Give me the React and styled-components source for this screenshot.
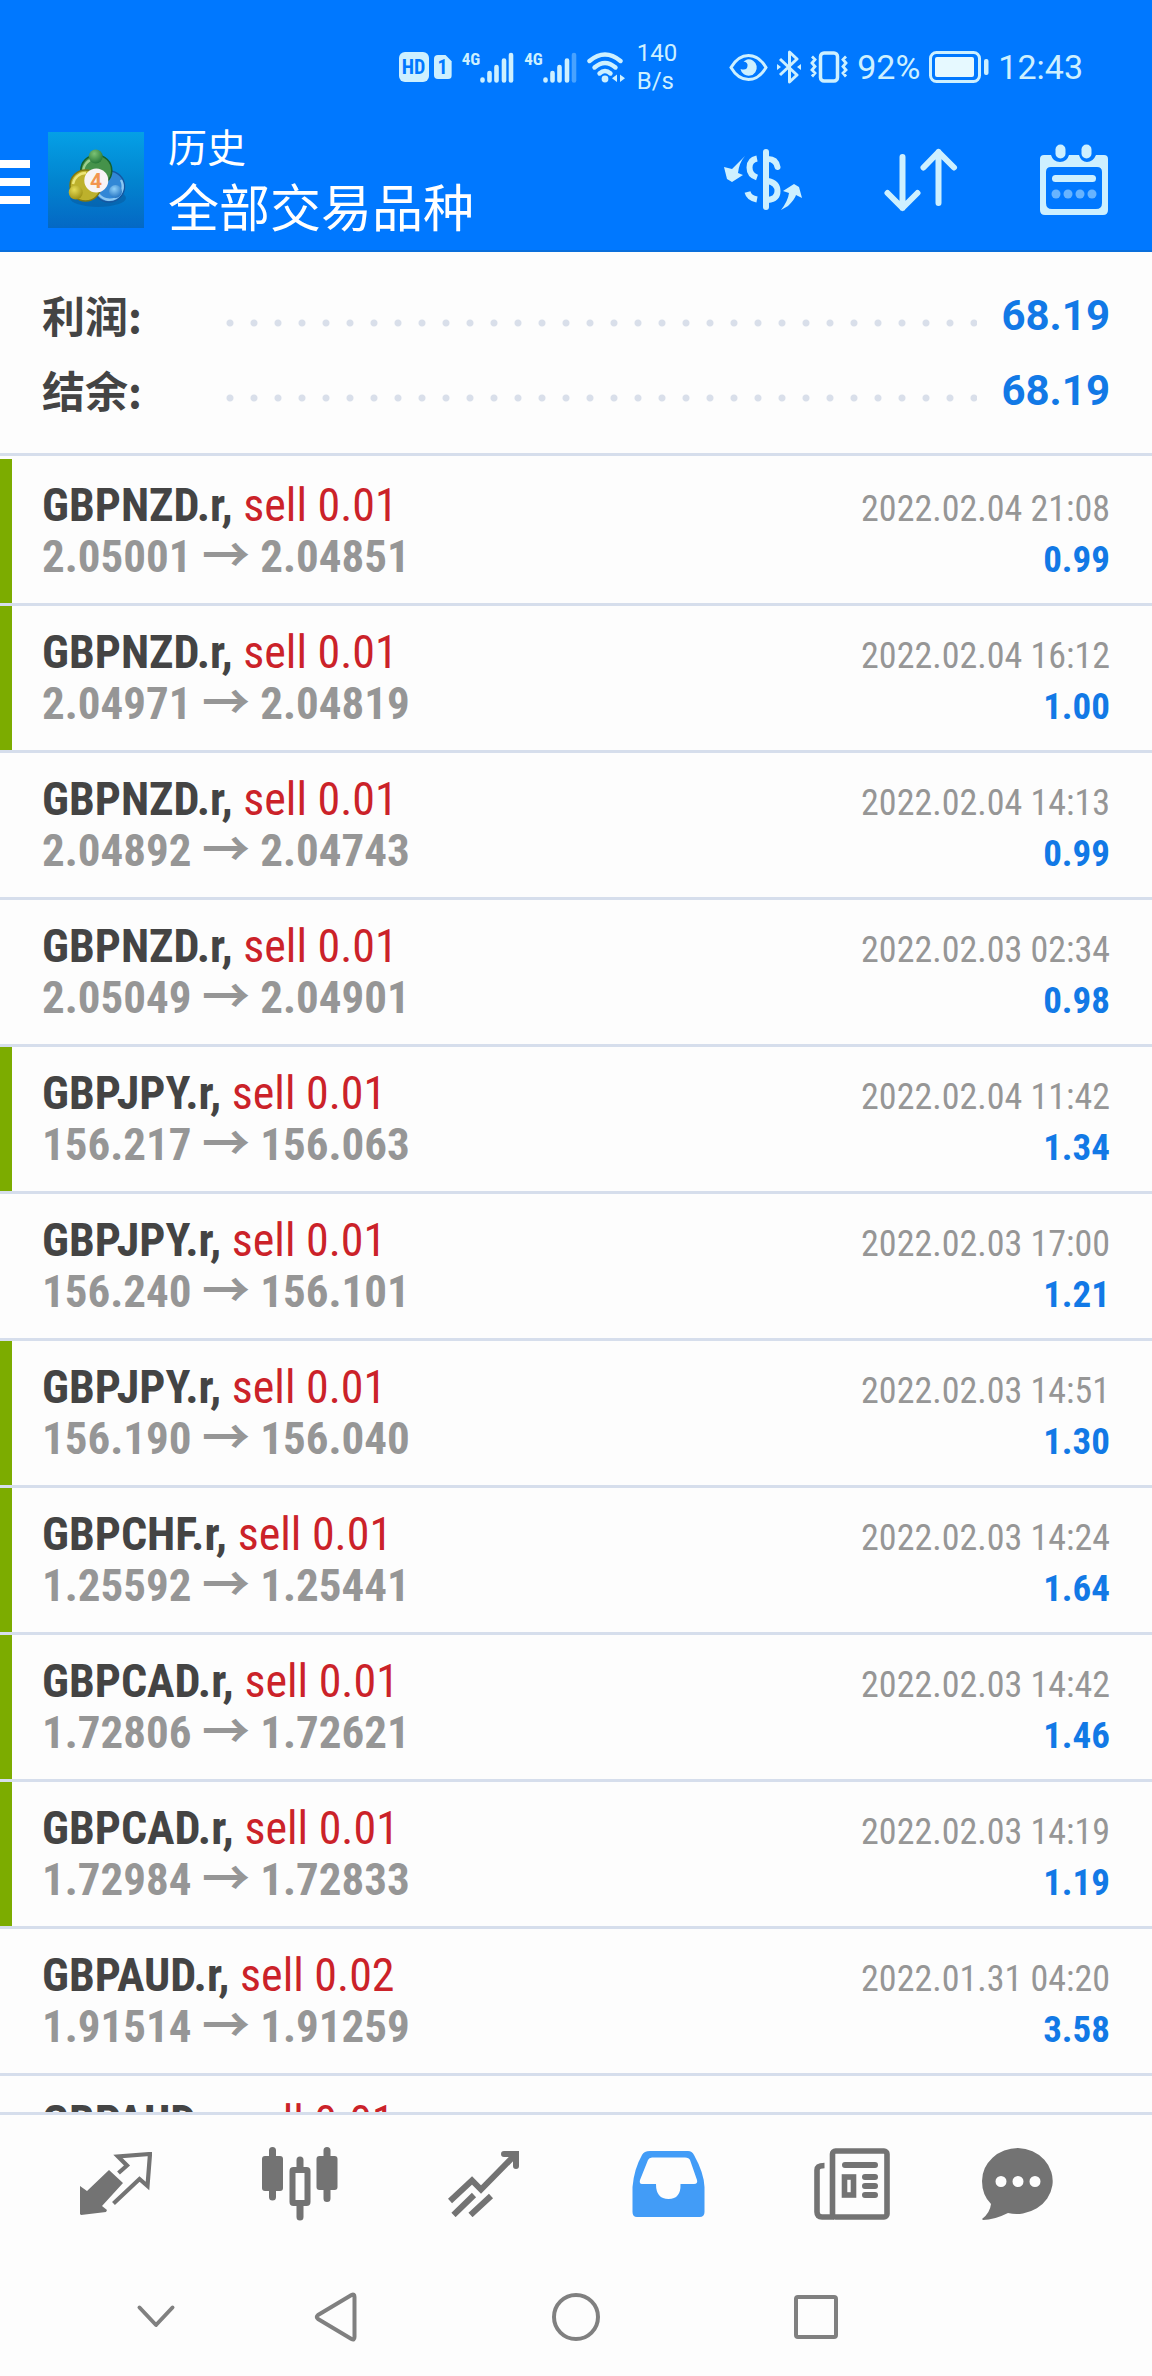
import React from 'react';
import styled, { createGlobalStyle } from 'styled-components';

const condensed = `'Roboto Condensed', 'Roboto', 'Noto Sans CJK SC', sans-serif`;
const regular = `'Roboto', 'Noto Sans CJK SC', sans-serif`;
const ice = '#cdf0ff';
const line = '#d6deec';

const GlobalStyle = createGlobalStyle`
  * { box-sizing: border-box; }
  body { margin: 0; background: #fdfdfd; font-family: ${regular}; }
  button { border: 0; padding: 0; background: none; color: inherit; font: inherit; display: flex; align-items: center; justify-content: center; }
  svg { display: block; flex: none; }
`;

const Screen = styled.div`
  display: flex;
  flex-direction: column;
  height: 100vh;
  background: #fdfdfd;
`;

const Top = styled.header`
  flex: none;
  background: #0078ff;
  border-bottom: 2px solid #0a6fdc;
`;

const StatusBar = styled.div`
  display: flex;
  align-items: center;
  justify-content: flex-end;
  gap: 52px;
  height: 112px;
  padding: 22px 69px 0 0;
  color: ${ice};
`;

const StatusGroup = styled.div`
  display: flex;
  align-items: center;
  gap: ${(p) => p.$gap}px;
`;

const Badge = styled.span`
  display: flex;
  align-items: center;
  justify-content: center;
  width: ${(p) => (p.$sim ? 18 : 30)}px;
  height: ${(p) => (p.$sim ? 24 : 30)}px;
  border-radius: ${(p) => (p.$sim ? 4 : 6)}px;
  clip-path: ${(p) => (p.$sim ? 'polygon(0 0, 66% 0, 100% 26%, 100% 100%, 0 100%)' : 'none')};
  background: ${ice};
  color: #0078ff;
  font: 700 20px/24px ${condensed};
`;

const Signal = styled.div`
  display: flex;
  height: 31px;
  span { font: 700 17px/14px ${condensed}; }
  svg { align-self: flex-end; }
`;

const Speed = styled.div`
  margin-left: 2px;
  font-size: 24px;
  line-height: 28px;
  white-space: pre-line;
`;

const StatusText = styled.span`
  font-size: 34px;
  line-height: 40px;
`;

const AppBar = styled.div`
  display: flex;
  align-items: flex-start;
  height: 138px;
`;

const MenuButton = styled.button`
  width: 30px;
  height: 140px;
`;

const Logo = styled.svg`
  margin: 20px 24px 0 18px;
`;

const Titles = styled.div`
  flex: 1;
  padding-top: 9px;
  color: #fff;
  font-family: 'Noto Sans CJK SC', sans-serif;
`;

const Subtitle = styled.div`
  font-size: 39px;
  line-height: 48px;
`;

const Title = styled.h1`
  margin: 0;
  font-size: 51px;
  font-weight: 400;
  line-height: 72px;
`;

const Actions = styled.div`
  display: flex;
  gap: 81px;
  height: 136px;
  padding-right: 43px;
`;

const Summary = styled.dl`
  flex: none;
  margin: 0;
  padding: 26px 42px 25px;
  border-bottom: 3px solid ${line};
`;

const SummaryRow = styled.div`
  display: flex;
  align-items: center;
  height: 75px;
  font-size: 42px;
  font-weight: 700;
  &::before {
    content: '';
    order: 1;
    flex: 1;
    height: 8px;
    margin: 14px 24px 0 0;
    background: radial-gradient(circle at center, #d9dfea 3px, transparent 4px) 0 0 / 24px 8px;
  }
`;

const SummaryLabel = styled.dt`
  width: 176px;
  padding-bottom: 4px;
  color: #444;
  font-family: 'Noto Sans CJK SC', sans-serif;
  font-size: 43px;
  line-height: 60px;
`;

const SummaryValue = styled.dd`
  order: 2;
  margin: 0;
  color: #1279e6;
`;

const Deals = styled.ul`
  flex: 1;
  min-height: 0;
  margin: 0;
  padding: 3px 0 0;
  overflow: hidden;
  list-style: none;
`;

const Deal = styled.li`
  display: grid;
  grid-template-columns: 1fr auto;
  grid-auto-rows: 51px;
  align-items: baseline;
  height: 147px;
  padding: 21px 42px 0;
  border-bottom: 3px solid ${line};
  background: ${(p) => (p.$marked ? 'linear-gradient(to right, #7cac00 12px, transparent 12px) padding-box' : 'none')};
  font-family: ${condensed};
  font-size: 45px;
  line-height: 51px;
  color: #969696;
`;

const Position = styled.span`
  font-size: 46px;
`;

const Symbol = styled.strong`
  color: #444;
  font-weight: 700;
`;

const Side = styled.span`
  color: #cb2229;
`;

const Prices = styled.span`
  font-weight: 700;
`;

const Arrow = styled.span`
  font-family: 'Noto Sans CJK SC', sans-serif;
  font-size: 48px;
  line-height: 0;
`;

const Time = styled.time`
  font-size: 36px;
  text-align: right;
`;

const Profit = styled.span`
  color: #1279e6;
  font-size: 37px;
  font-weight: 700;
  text-align: right;
`;

const Tabs = styled.nav`
  flex: none;
  display: grid;
  grid-template-columns: repeat(5, 184fr) 148fr;
  height: 141px;
  padding: 0 60px 0 24px;
  border-top: 3px solid ${line};
`;

const Tab = styled.button`
  && { color: ${(p) => (p.$active ? '#429cf7' : '#737373')}; }
`;

const SystemNav = styled.nav`
  flex: none;
  display: grid;
  grid-template-columns: 120fr 240fr 240fr 240fr;
  height: 123px;
  padding: 5px 216px 0 96px;
  color: #808080;
`;

const deals = [
  ['GBPNZD.r', '0.01', '2.05001', '2.04851', '2022.02.04 21:08', '0.99', true],
  ['GBPNZD.r', '0.01', '2.04971', '2.04819', '2022.02.04 16:12', '1.00', true],
  ['GBPNZD.r', '0.01', '2.04892', '2.04743', '2022.02.04 14:13', '0.99', false],
  ['GBPNZD.r', '0.01', '2.05049', '2.04901', '2022.02.03 02:34', '0.98', false],
  ['GBPJPY.r', '0.01', '156.217', '156.063', '2022.02.04 11:42', '1.34', true],
  ['GBPJPY.r', '0.01', '156.240', '156.101', '2022.02.03 17:00', '1.21', false],
  ['GBPJPY.r', '0.01', '156.190', '156.040', '2022.02.03 14:51', '1.30', true],
  ['GBPCHF.r', '0.01', '1.25592', '1.25441', '2022.02.03 14:24', '1.64', true],
  ['GBPCAD.r', '0.01', '1.72806', '1.72621', '2022.02.03 14:42', '1.46', true],
  ['GBPCAD.r', '0.01', '1.72984', '1.72833', '2022.02.03 14:19', '1.19', true],
  ['GBPAUD.r', '0.02', '1.91514', '1.91259', '2022.01.31 04:20', '3.58', false],
  ['GBPAUD.r', '0.01', '1.91514', '1.91259', '2022.02.01 16:27', '1.20', false],
];

const SignalBars = ({ weak }) => (
  <svg width="34" height="31" viewBox="0 0 34 31" stroke="currentColor" strokeWidth="4.6" strokeLinecap="round">
    <path d="M2.5 27.5V28.5M9.5 21V28.5M16.5 15V28.5M24 8.5V28.5" />
    <path d="M31 3V28.5" opacity={weak ? 0.35 : 1} />
  </svg>
);

const WifiIcon = () => (
  <svg width="38" height="31" viewBox="0 0 38 31" fill="none" stroke="currentColor" strokeWidth="4.4" strokeLinecap="round">
    <path d="M2.5 9Q18 -4 33.5 9" />
    <path d="M7.5 15.5Q18 6.5 28.5 15.5" />
    <path d="M12.5 21.5Q18 16.5 23.5 21.5" />
    <circle cx="18" cy="27" r="3.4" fill="currentColor" stroke="none" />
    <path d="M30 22.5V30L25 26.3ZM33 22.5V30L38 26.3Z" fill="currentColor" stroke="none" />
  </svg>
);

const EyeIcon = () => (
  <svg width="39" height="27" viewBox="0 0 39 27">
    <path d="M2 13.5Q9 1.5 19.5 1.5T37 13.5Q30 25.5 19.5 25.5T2 13.5Z" fill="none" stroke="currentColor" strokeWidth="3" />
    <path d="M18 5.5A8.2 8.2 0 1 1 11.5 15Q18 17 18.5 12Q19 8 14.5 7.5Z" fill="currentColor" />
  </svg>
);

const BluetoothIcon = () => (
  <svg width="24" height="34" viewBox="0 0 24 34" fill="none" stroke="currentColor" strokeWidth="3" strokeLinejoin="round">
    <path d="M3 9L20 25L12.5 32V2L20 9L3 25" />
    <path d="M0 14L4 17L0 20ZM24 14L20 17L24 20Z" fill="currentColor" stroke="none" />
  </svg>
);

const VibrateIcon = () => (
  <svg width="38" height="32" viewBox="0 0 38 32" fill="none" stroke="currentColor">
    <rect x="10.5" y="2" width="17" height="28" rx="3.5" strokeWidth="3.5" />
    <path d="M2 5.5L5 8.5L2 12L5 15.5L2 19L5 22L2 25.5M36 5.5L33 8.5L36 12L33 15.5L36 19L33 22L36 25.5" strokeWidth="2.8" />
  </svg>
);

const BatteryIcon = () => (
  <svg width="60" height="32" viewBox="0 0 60 32">
    <rect x="1.5" y="1.5" width="49" height="29" rx="6" fill="none" stroke="currentColor" strokeWidth="3" />
    <rect x="6" y="6" width="39" height="20" rx="2" fill="#e6f9ff" />
    <rect x="55" y="8" width="4.5" height="16" rx="2" fill="currentColor" />
  </svg>
);

const MetaLogo = () => (
  <Logo width="96" height="96" viewBox="0 0 96 96" role="img" aria-label="MetaTrader 4">
    <defs>
      <linearGradient id="sky" x1="0" y1="0" x2="0" y2="1">
        <stop offset="0" stopColor="#05a0e6" />
        <stop offset="0.5" stopColor="#0285d0" />
        <stop offset="1" stopColor="#0468c4" />
      </linearGradient>
      <radialGradient id="green" cx="0.4" cy="0.3" r="0.8">
        <stop offset="0" stopColor="#7cc274" />
        <stop offset="1" stopColor="#1b6e30" />
      </radialGradient>
      <radialGradient id="gold" cx="0.4" cy="0.3" r="0.8">
        <stop offset="0" stopColor="#e6dc55" />
        <stop offset="1" stopColor="#94870c" />
      </radialGradient>
      <radialGradient id="azure" cx="0.4" cy="0.3" r="0.8">
        <stop offset="0" stopColor="#8fd0fa" />
        <stop offset="1" stopColor="#1668bb" />
      </radialGradient>
    </defs>
    <rect width="96" height="96" fill="url(#sky)" />
    <ellipse cx="50" cy="66" rx="28" ry="9" fill="#0a4f8f" opacity="0.4" />
    <circle cx="61" cy="54.5" r="15.5" fill="#3187d6" stroke="#1557a0" strokeWidth="1.5" />
    <path d="M73 48A13 13 0 0 1 50 61" fill="none" stroke="#8cc8f2" strokeWidth="2.4" />
    <circle cx="48.3" cy="38.5" r="15.5" fill="#45924a" stroke="#14602c" strokeWidth="1.5" />
    <path d="M36 44A13 13 0 0 1 45 27" fill="none" stroke="#9ccf8e" strokeWidth="2.4" />
    <circle cx="37.5" cy="53.5" r="15.5" fill="#bdb12c" stroke="#81780f" strokeWidth="1.5" />
    <path d="M25 52A13 13 0 0 1 38 41" fill="none" stroke="#ece578" strokeWidth="2.4" />
    <circle cx="47.7" cy="24.5" r="7" fill="url(#green)" />
    <circle cx="27.7" cy="60.5" r="7" fill="url(#gold)" />
    <circle cx="67.5" cy="59.5" r="6.5" fill="url(#azure)" />
    <circle cx="48.3" cy="48.5" r="12" fill="#f7f3f5" />
    <text x="48" y="56" textAnchor="middle" fontFamily="Roboto, sans-serif" fontWeight="700" fontSize="21" fill="#f2954e">4</text>
  </Logo>
);

const CurrencyIcon = () => (
  <svg width="79" height="62" viewBox="0 0 79 62" fill="none" stroke={ice}>
    <path d="M42 3V58" strokeWidth="6" strokeLinecap="round" />
    <path d="M33 9.5Q25.5 11 25.5 18.5T33 28.5M23.5 43Q25 49 33 50.5" strokeWidth="6" />
    <path d="M44 10Q52 10 53.5 18M44 32Q53.5 34 53.5 42T44 51" strokeWidth="6" strokeLinecap="round" />
    <path d="M21 7L8 20L0 18L3 30L8 33L19 26L14 24Q15 14 21 7ZM57 61L64 57Q71 50 72 46L78 49L75 38L70 35L59 42L65 44Q64 52 57 61Z" fill={ice} stroke="none" />
  </svg>
);

const SortIcon = () => (
  <svg width="74" height="64" viewBox="0 0 74 64" fill="none" stroke={ice} strokeWidth="6" strokeLinecap="round" strokeLinejoin="round">
    <path d="M18.5 9V60M3.5 45L18.5 60L33.5 45M54.5 55V4M39.5 19.5L54.5 4L70 19.5" />
  </svg>
);

const CalendarIcon = () => (
  <svg width="70" height="72" viewBox="0 0 70 72" fill={ice}>
    <path fillRule="evenodd" d="M5 11H12Q14 18 21 18T30 11H40Q42 18 48 18T57 11H65Q69 11 69 15V66Q69 71 64 71H6Q1 71 1 66V15Q1 11 5 11ZM12 23Q7 23 7 28V59Q7 65 13 65H57Q63 65 63 59V28Q63 23 58 23Z" />
    <rect x="16.5" y="0.5" width="10" height="14" rx="5" />
    <rect x="42.5" y="0.5" width="10" height="14" rx="5" />
    <rect x="13" y="31" width="44" height="7" rx="3.5" />
    <g opacity="0.5">
      <circle cx="17" cy="50" r="4.5" /><circle cx="29" cy="50" r="4.5" /><circle cx="41" cy="50" r="4.5" /><circle cx="53" cy="50" r="4.5" />
    </g>
  </svg>
);

const QuotesIcon = () => (
  <svg width="72" height="64" viewBox="0 0 72 64">
    <path d="M0 34L7 39L29 18L43 31L22 54L27 58L26 60L1 63L0 62Z" fill="currentColor" />
    <path d="M38.5 21L47 13.5L38 4.5L70 2L67.5 34L59.5 27L33.5 51.5" fill="none" stroke="currentColor" strokeWidth="4.2" />
  </svg>
);

const ChartIcon = () => (
  <svg width="76" height="74" viewBox="0 0 76 74" fill="none" stroke="currentColor">
    <path d="M10.5 3.5V50M65 3.5V51.5M38 13V22M38 58V70" strokeWidth="7" strokeLinecap="round" />
    <rect x="0" y="9" width="21" height="35" rx="3" fill="currentColor" stroke="none" />
    <rect x="54.5" y="9" width="21" height="34" rx="3" fill="currentColor" stroke="none" />
    <rect x="30.5" y="23" width="15" height="33" rx="1" strokeWidth="6" />
  </svg>
);

const TradeIcon = () => (
  <svg width="72" height="66" viewBox="0 0 72 66" fill="none" stroke="currentColor" strokeWidth="6">
    <path d="M2 50L24 29.5L33 38.5L67 4" />
    <path d="M56 3H68V15" strokeLinecap="round" />
    <path d="M5.5 64L26 44M22.5 64L43 45" />
  </svg>
);

const HistoryIcon = () => (
  <svg width="73" height="67" viewBox="0 0 73 67">
    <path fillRule="evenodd" fill="currentColor" d="M18 0H56Q60 0 62 4Q72 22 72.5 36V61Q72.5 66 67.5 66H5Q0.5 66 0.5 61V36Q2 18 10 4Q12 0 18 0ZM20 6.5Q17 6.5 16 9L8 29Q7 33 10 33H24Q24 48 36.5 48T48.5 33H62Q66 33 65 29L58 9Q57 6.5 53 6.5Z" />
  </svg>
);

const NewsIcon = () => (
  <svg width="76" height="72" viewBox="0 0 76 72" fill="none" stroke="currentColor" strokeWidth="5.6">
    <rect x="18.5" y="3" width="54.5" height="66" rx="3" />
    <path d="M20 69H8Q3 69 3 64V22Q3 17.5 10.5 17.5" />
    <path d="M31 17H61M51 29H61M51 38H61M51 47H61" strokeLinecap="round" strokeWidth="6" />
    <rect x="30.5" y="29" width="9" height="18" />
  </svg>
);

const MessagesIcon = () => (
  <svg width="72" height="72" viewBox="0 0 72 72">
    <path fill="currentColor" fillRule="evenodd" d="M36 0A36 33 0 1 1 26 65Q12 72 1 72L0 71Q8 65 9 56Q0 47 0 33A36 33 0 0 1 36 0ZM19 28A5.5 5.5 0 1 0 19 39A5.5 5.5 0 1 0 19 28ZM36 28A5.5 5.5 0 1 0 36 39A5.5 5.5 0 1 0 36 28ZM53 28A5.5 5.5 0 1 0 53 39A5.5 5.5 0 1 0 53 28Z" />
  </svg>
);

const NavIcon = ({ d }) => (
  <svg width="52" height="52" viewBox="0 0 52 52" fill="none" stroke="currentColor" strokeWidth="4" strokeLinecap="round" strokeLinejoin="round">
    <path d={d} />
  </svg>
);

const tabs = [
  ['行情', QuotesIcon],
  ['图表', ChartIcon],
  ['交易', TradeIcon],
  ['历史', HistoryIcon],
  ['新闻', NewsIcon],
  ['信息', MessagesIcon],
];

const systemKeys = [
  ['收起', 'M9.5 16.5L26 34L42.5 16.5'],
  ['返回', 'M41.5 4Q44.5 2.5 44.5 6V46Q44.5 49.5 41.5 48L8 28Q5.5 26 8 24Z'],
  ['主屏幕', 'M26 4A22 22 0 1 1 26 48A22 22 0 1 1 26 4Z'],
  ['最近任务', 'M8 6H44Q46 6 46 8V44Q46 46 44 46H8Q6 46 6 44V8Q6 6 8 6Z'],
];

export default function App() {
  return (
    <Screen>
      <GlobalStyle />
      <Top>
        <StatusBar>
          <StatusGroup $gap={10}>
            <StatusGroup $gap={5}>
              <Badge>HD</Badge>
              <Badge $sim>1</Badge>
            </StatusGroup>
            <Signal><span>4G</span><SignalBars /></Signal>
            <Signal><span>4G</span><SignalBars weak /></Signal>
            <WifiIcon />
            <Speed>{'140\nB/s'}</Speed>
          </StatusGroup>
          <StatusGroup $gap={9}>
            <EyeIcon />
            <BluetoothIcon />
            <VibrateIcon />
            <StatusText>92%</StatusText>
            <BatteryIcon />
            <StatusText>12:43</StatusText>
          </StatusGroup>
        </StatusBar>
        <AppBar>
          <MenuButton aria-label="菜单">
            <svg width="30" height="44" viewBox="0 0 30 44" fill="#fff">
              <path d="M0 0H30V8H0ZM0 18H30V26H0ZM0 36H30V44H0Z" />
            </svg>
          </MenuButton>
          <MetaLogo />
          <Titles>
            <Subtitle>历史</Subtitle>
            <Title>全部交易品种</Title>
          </Titles>
          <Actions>
            <button aria-label="货币"><CurrencyIcon /></button>
            <button aria-label="排序"><SortIcon /></button>
            <button aria-label="日期"><CalendarIcon /></button>
          </Actions>
        </AppBar>
      </Top>
      <Summary>
        <SummaryRow>
          <SummaryLabel>利润:</SummaryLabel>
          <SummaryValue>68.19</SummaryValue>
        </SummaryRow>
        <SummaryRow>
          <SummaryLabel>结余:</SummaryLabel>
          <SummaryValue>68.19</SummaryValue>
        </SummaryRow>
      </Summary>
      <Deals>
        {deals.map(([symbol, lots, open, close, time, profit, marked], i) => (
          <Deal key={i} $marked={marked}>
            <Position><Symbol>{symbol},</Symbol> <Side>sell {lots}</Side></Position>
            <Time>{time}</Time>
            <Prices>{open} <Arrow>→</Arrow> {close}</Prices>
            <Profit>{profit}</Profit>
          </Deal>
        ))}
      </Deals>
      <Tabs>
        {tabs.map(([label, Icon]) => (
          <Tab key={label} aria-label={label} $active={label === '历史'}><Icon /></Tab>
        ))}
      </Tabs>
      <SystemNav>
        {systemKeys.map(([label, d]) => (
          <button key={label} aria-label={label}><NavIcon d={d} /></button>
        ))}
      </SystemNav>
    </Screen>
  );
}
